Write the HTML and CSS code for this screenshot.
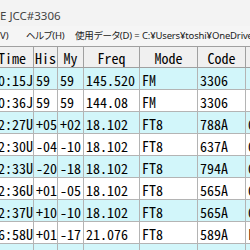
FILE: index.html
```html
<!DOCTYPE html>
<html lang="ja">
<head>
<meta charset="utf-8">
<link rel="stylesheet" href="styles.css">
</head>
<body>
<div class="win">
  <div class="titlebar"><span class="title">E JCC#3306</span></div>
  <div class="menubar">
    <span class="mi first">V)</span>
    <span class="mi help">ヘルプ(H)</span>
    <span class="mi path">使用データ(D) = C:¥Users¥toshi¥OneDrive¥Documents</span>
  </div>
  <div class="list">
    <div class="row hdr">
      <div class="c time">Time</div><div class="c">His</div><div class="c">My</div><div class="c">Freq</div><div class="c">Mode</div><div class="c">Code</div><div class="c last"></div>
    </div>
    <div class="row alt">
      <div class="c time">20:15J</div><div class="c">59</div><div class="c">59</div><div class="c">145.520</div><div class="c">FM</div><div class="c">3306</div><div class="c last"></div>
    </div>
    <div class="row">
      <div class="c time">20:36J</div><div class="c">59</div><div class="c">59</div><div class="c">144.08</div><div class="c">FM</div><div class="c">3306</div><div class="c last"></div>
    </div>
    <div class="row alt">
      <div class="c time">12:27U</div><div class="c">+05</div><div class="c">+02</div><div class="c">18.102</div><div class="c">FT8</div><div class="c">788A</div><div class="c last">0</div>
    </div>
    <div class="row">
      <div class="c time">12:30U</div><div class="c">-04</div><div class="c">-10</div><div class="c">18.102</div><div class="c">FT8</div><div class="c">637A</div><div class="c last">0</div>
    </div>
    <div class="row alt">
      <div class="c time">12:33U</div><div class="c">-20</div><div class="c">-18</div><div class="c">18.102</div><div class="c">FT8</div><div class="c">794A</div><div class="c last">0</div>
    </div>
    <div class="row">
      <div class="c time">12:36U</div><div class="c">+01</div><div class="c">-05</div><div class="c">18.102</div><div class="c">FT8</div><div class="c">565A</div><div class="c last">0</div>
    </div>
    <div class="row alt">
      <div class="c time">12:37U</div><div class="c">+10</div><div class="c">-10</div><div class="c">18.102</div><div class="c">FT8</div><div class="c">565A</div><div class="c last">0</div>
    </div>
    <div class="row">
      <div class="c time">06:58U</div><div class="c">+01</div><div class="c">-17</div><div class="c">21.076</div><div class="c">FT8</div><div class="c">589A</div><div class="c last">F</div>
    </div>
    <div class="row alt">
      <div class="c time"></div><div class="c"></div><div class="c"></div><div class="c"></div><div class="c"></div><div class="c"></div><div class="c last"></div>
    </div>
  </div>
</div>
</body>
</html>
```
FILE: styles.css
```css
html, body {
  margin: 0;
  padding: 0;
  background: #ffffff;
  overflow: hidden;
}
.win {
  width: 250px;
  height: 250px;
  overflow: hidden;
  background: #ffffff;
}
.titlebar {
  height: 26px;
  box-sizing: border-box;
  padding-top: 4px;
  display: flex;
  align-items: center;
  background: #f3f3f3;
  font-family: "Noto Sans", "Noto Sans CJK JP", sans-serif;
  font-size: 11.5px;
  color: #444444;
  white-space: nowrap;
}
.menubar {
  height: 20px;
  box-sizing: border-box;
  padding-bottom: 2px;
  display: flex;
  align-items: center;
  background: #f5f5f5;
  font-family: "Noto Sans", "Noto Sans CJK JP", sans-serif;
  font-feature-settings: "palt";
  font-size: 9.5px;
  color: #222222;
  white-space: nowrap;
}
.mi { flex: none; }
.mi.first { width: 26px; }
.mi.help { width: 49px; letter-spacing: -0.3px; }
.mi.path { letter-spacing: -0.15px; }
.list {
  border-top: 1px solid #a0a0a0;
  font-family: "Noto Sans Mono CJK JP", "DejaVu Sans Mono", monospace;
  font-size: 14px;
  color: #000000;
}
.row {
  display: grid;
  grid-template-columns: 34px 24px 26px 56px 58px 48px 40px;
  height: 22px;
}
.c {
  display: flex;
  align-items: center;
  box-sizing: border-box;
  padding-left: 2px;
  padding-top: 2px;
  border-right: 1px solid #b4b4b4;
  border-bottom: 1px solid #b4b4b4;
  overflow: hidden;
  white-space: nowrap;
}
.c.time {
  justify-content: flex-end;
  padding-left: 0;
  padding-right: 0;
}
.row.alt { background: #d2f6fa; }
.row.hdr {
  height: 21px;
  background: #f0f0f0;
}
.row.hdr .c {
  justify-content: center;
  padding-left: 0;
  border-right-color: #a0a0a0;
  border-bottom-color: #a0a0a0;
}
.row.hdr .c.time {
  justify-content: flex-end;
  padding-right: 7px;
}
```
